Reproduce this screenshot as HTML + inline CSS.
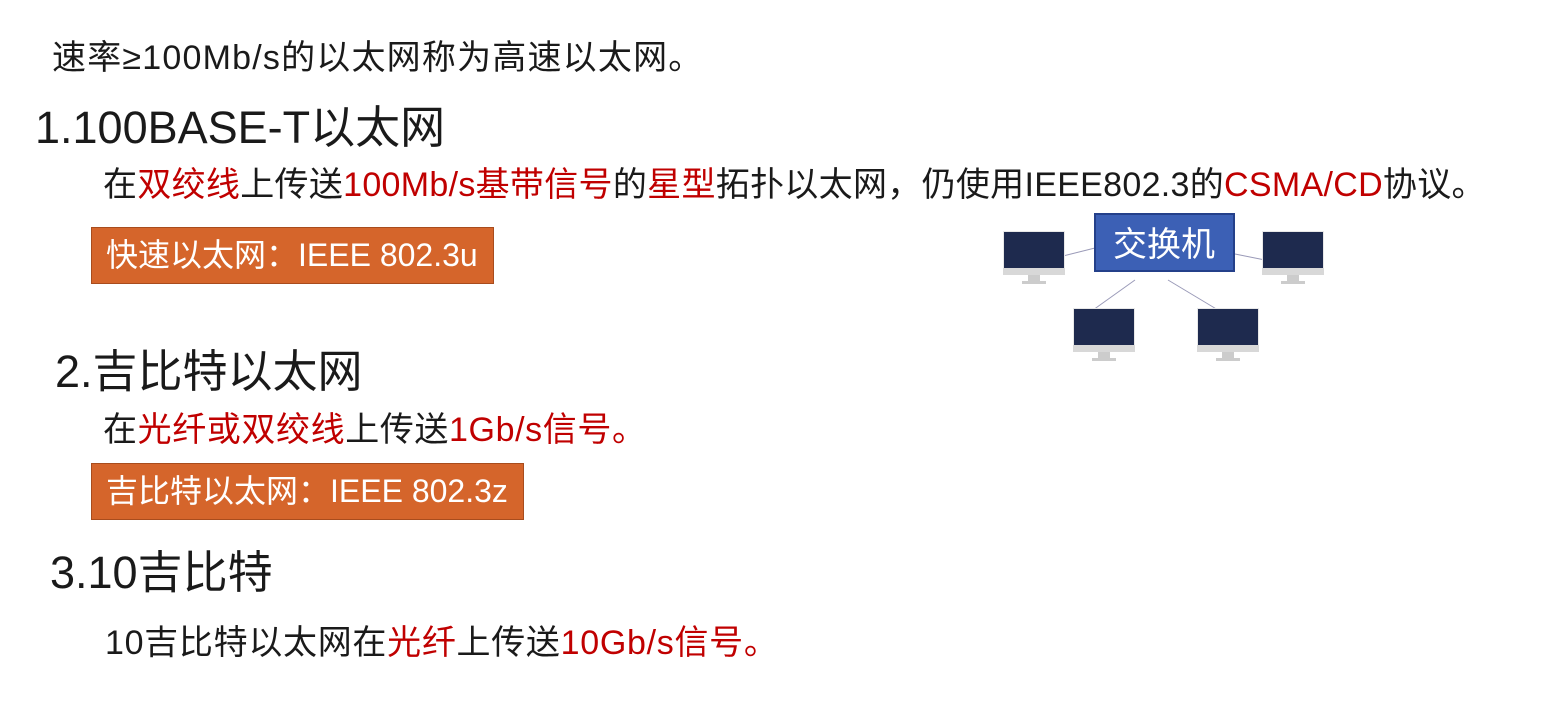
<!DOCTYPE html>
<html><head><meta charset="utf-8"><style>
body{margin:0;width:1564px;height:713px;background:#fff;position:relative;overflow:hidden;font-family:"Liberation Sans","Noto Sans CJK SC",sans-serif;color:#1a1a1a}
.t{position:absolute;white-space:nowrap;line-height:1}
.r{color:#c00000}
.h{font-size:45px}
.p{font-size:34px}
.box{position:absolute;background:#d5652b;border:1px solid #a84c1d;color:#fff;font-size:32px;line-height:54px;padding-left:14px;box-sizing:border-box;white-space:nowrap}
</style></head><body>
<div class="t p" style="left:52px;top:41px;letter-spacing:1.2px">速率≥100Mb/s的以太网称为高速以太网。</div>
<div class="t h" style="left:35px;top:105px">1.100BASE-T以太网</div>
<div class="t p" style="left:103px;top:168px;letter-spacing:0.3px">在<span class="r">双绞线</span>上传送<span class="r">100Mb/s基带信号</span>的<span class="r">星型</span>拓扑以太网，仍使用IEEE802.3的<span class="r">CSMA/CD</span>协议。</div>
<div class="box" style="left:91px;top:227px;width:403px;height:57px">快速以太网：IEEE 802.3u</div>

<svg style="position:absolute;left:990px;top:210px" width="360" height="160">
<g stroke="#9a9ab8" stroke-width="1">
<line x1="65" y1="48" x2="105" y2="38"/><line x1="245" y1="44" x2="275" y2="50"/>
<line x1="145" y1="70" x2="103" y2="100"/><line x1="178" y1="70" x2="228" y2="100"/>
</g>
<rect x="105" y="4" width="139" height="57" fill="#3c60b5" stroke="#24408a" stroke-width="2"/>
<text x="174" y="46" text-anchor="middle" fill="#fff" font-size="34" font-family="Liberation Sans,Noto Sans CJK SC,sans-serif">交换机</text>
<g id="m">
<rect x="13" y="21" width="62" height="44" fill="#e8e8e8"/>
<rect x="14" y="22" width="60" height="36" fill="#1e2a4e"/>
<rect x="13" y="58" width="62" height="7" fill="#d8d8d8"/>
<rect x="38" y="65" width="12" height="6" fill="#ccc"/>
<rect x="32" y="71" width="24" height="3" fill="#ccc"/>
</g>
<use href="#m" x="259" y="0"/>
<use href="#m" x="70" y="77"/>
<use href="#m" x="194" y="77"/>
</svg>

<div class="t h" style="left:55px;top:349px">2.吉比特以太网</div>
<div class="t p" style="left:103px;top:413px;letter-spacing:0.6px">在<span class="r">光纤或双绞线</span>上传送<span class="r">1Gb/s信号。</span></div>
<div class="box" style="left:91px;top:463px;width:433px;height:57px">吉比特以太网：IEEE 802.3z</div>
<div class="t h" style="left:50px;top:550px">3.10吉比特</div>
<div class="t p" style="left:105px;top:626px;letter-spacing:0.7px">10吉比特以太网在<span class="r">光纤</span>上传送<span class="r">10Gb/s信号。</span></div>
</body></html>
